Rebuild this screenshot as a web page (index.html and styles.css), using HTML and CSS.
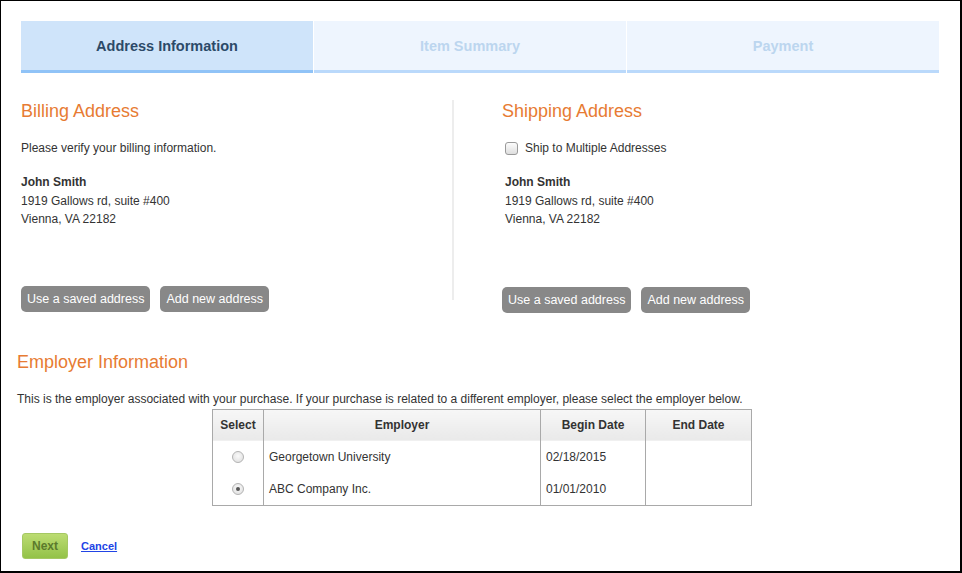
FILE: index.html
```html
<!DOCTYPE html>
<html>
<head>
<meta charset="utf-8">
<link rel="stylesheet" href="styles.css">
</head>
<body>
<div class="frame">
  <div class="tabs">
    <div class="tab active">Address Information</div>
    <div class="tab">Item Summary</div>
    <div class="tab">Payment</div>
  </div>

  <div class="addresses">
    <div class="col">
      <h2 class="heading">Billing Address</h2>
      <p class="intro">Please verify your billing information.</p>
      <div class="addr">
        <div class="name">John Smith</div>
        <div>1919 Gallows rd, suite #400</div>
        <div>Vienna, VA 22182</div>
      </div>
      <div class="btns">
        <span class="btn">Use a saved address</span>
        <span class="btn">Add new address</span>
      </div>
    </div>
    <div class="divider"></div>
    <div class="col right">
      <h2 class="heading">Shipping Address</h2>
      <p class="intro check-line"><span class="checkbox"></span>Ship to Multiple Addresses</p>
      <div class="addr indent">
        <div class="name">John Smith</div>
        <div>1919 Gallows rd, suite #400</div>
        <div>Vienna, VA 22182</div>
      </div>
      <div class="btns btns-right">
        <span class="btn">Use a saved address</span>
        <span class="btn">Add new address</span>
      </div>
    </div>
  </div>

  <div class="employer">
    <h2 class="heading">Employer Information</h2>
    <p class="emp-text">This is the employer associated with your purchase. If your purchase is related to a different employer, please select the employer below.</p>
    <table class="emp-table">
      <thead>
        <tr>
          <th class="c-sel">Select</th>
          <th class="c-emp">Employer</th>
          <th class="c-begin">Begin Date</th>
          <th class="c-end">End Date</th>
        </tr>
      </thead>
      <tbody>
        <tr>
          <td class="sel"><span class="radio"></span></td>
          <td>Georgetown University</td>
          <td>02/18/2015</td>
          <td></td>
        </tr>
        <tr>
          <td class="sel"><span class="radio checked"></span></td>
          <td>ABC Company Inc.</td>
          <td>01/01/2010</td>
          <td></td>
        </tr>
      </tbody>
    </table>
    <div class="actions">
      <span class="next">Next</span>
      <a class="cancel" href="#">Cancel</a>
    </div>
  </div>
</div>
</body>
</html>
```

FILE: styles.css
```css
html, body {
  margin: 0;
  padding: 0;
  background: #fff;
}
body {
  font-family: "Liberation Sans", Arial, sans-serif;
  font-size: 12px;
  color: #333;
}
.frame {
  box-sizing: border-box;
  width: 962px;
  height: 573px;
  border-top: 1px solid #000;
  border-left: 1px solid #000;
  border-right: 2px solid #000;
  border-bottom: 2px solid #000;
  padding: 20px 21px 0 20px;
  overflow: hidden;
}
.tabs {
  display: grid;
  grid-template-columns: 292px 312px 1fr;
  column-gap: 1px;
  height: 52px;
}
.tab {
  background: #eef5fe;
  border-bottom: 3px solid #bad9fb;
  color: #bcd6ef;
  font-weight: bold;
  font-size: 14.5px;
  display: flex;
  align-items: center;
  justify-content: center;
}
.tab.active {
  background: #cfe4fa;
  border-bottom-color: #90c3f7;
  color: #2c4a68;
}
.addresses {
  display: flex;
  margin-top: 27px;
}
.col {
  width: 431px;
}
.col.right {
  padding-left: 48px;
  flex: 1;
}
.divider {
  width: 2px;
  height: 200px;
  background: #ededed;
}
.heading {
  margin: 0;
  font-size: 18px;
  font-weight: normal;
  line-height: 22px;
  color: #e77b33;
}
.intro {
  margin: 17px 0 0;
  line-height: 19px;
}
.check-line {
  display: flex;
  align-items: center;
}
.checkbox {
  box-sizing: border-box;
  width: 13px;
  height: 13px;
  border: 1px solid #9a9a9a;
  border-radius: 3px;
  background: linear-gradient(#fcfcfc, #dedede);
  margin: 0 7px 0 3px;
}
.addr {
  margin-top: 15px;
  line-height: 18.5px;
}
.addr.indent {
  padding-left: 3px;
}
.name {
  font-weight: bold;
}
.btns {
  display: flex;
  gap: 10px;
  margin-top: 57px;
}
.btns-right {
  margin-top: 58px;
}
.btn {
  background: #888;
  color: #fff;
  font-size: 12.5px;
  height: 26px;
  line-height: 26px;
  padding: 0 6px;
  border-radius: 5px;
}
.employer {
  margin-left: -4px;
  margin-top: 38px;
}
.emp-text {
  margin: 17px 0 0;
  line-height: 19px;
}
.emp-table {
  border-collapse: collapse;
  margin-left: 195px;
  width: 540px;
  border: 1px solid #a9a9a9;
}
.emp-table th {
  height: 31px;
  padding: 0;
  font-weight: bold;
  text-align: center;
  background: linear-gradient(#f7f7f7, #e9e9e9);
  border-left: 1px solid #a9a9a9;
  border-right: 1px solid #a9a9a9;
  color: #333;
}
.emp-table td {
  height: 32px;
  padding: 0 5px;
  border-left: 1px solid #a9a9a9;
  border-right: 1px solid #a9a9a9;
}
.c-sel { width: 50px; }
.c-emp { width: 276px; }
.c-begin { width: 104px; }
.emp-table td.sel {
  text-align: center;
  padding: 0;
}
.radio {
  display: inline-block;
  box-sizing: border-box;
  width: 12px;
  height: 12px;
  border-radius: 50%;
  border: 1px solid #b4b4b4;
  background: radial-gradient(circle at 50% 40%, #fafafa, #dcdcdc);
  vertical-align: middle;
  position: relative;
}
.radio.checked::after {
  content: "";
  position: absolute;
  left: 3px;
  top: 3px;
  width: 4px;
  height: 4px;
  border-radius: 50%;
  background: #555;
}
.actions {
  display: flex;
  align-items: center;
  margin-top: 27px;
  margin-left: 5px;
}
.next {
  box-sizing: border-box;
  width: 46px;
  height: 26px;
  line-height: 24px;
  text-align: center;
  font-weight: bold;
  color: #5b7a2c;
  border: 1px solid #a5c863;
  border-radius: 3px;
  background: linear-gradient(#bcdc72, #93c247);
}
.cancel {
  margin-left: 13px;
  font-size: 11px;
  font-weight: bold;
  color: #2144e5;
  text-decoration: underline;
}
```
